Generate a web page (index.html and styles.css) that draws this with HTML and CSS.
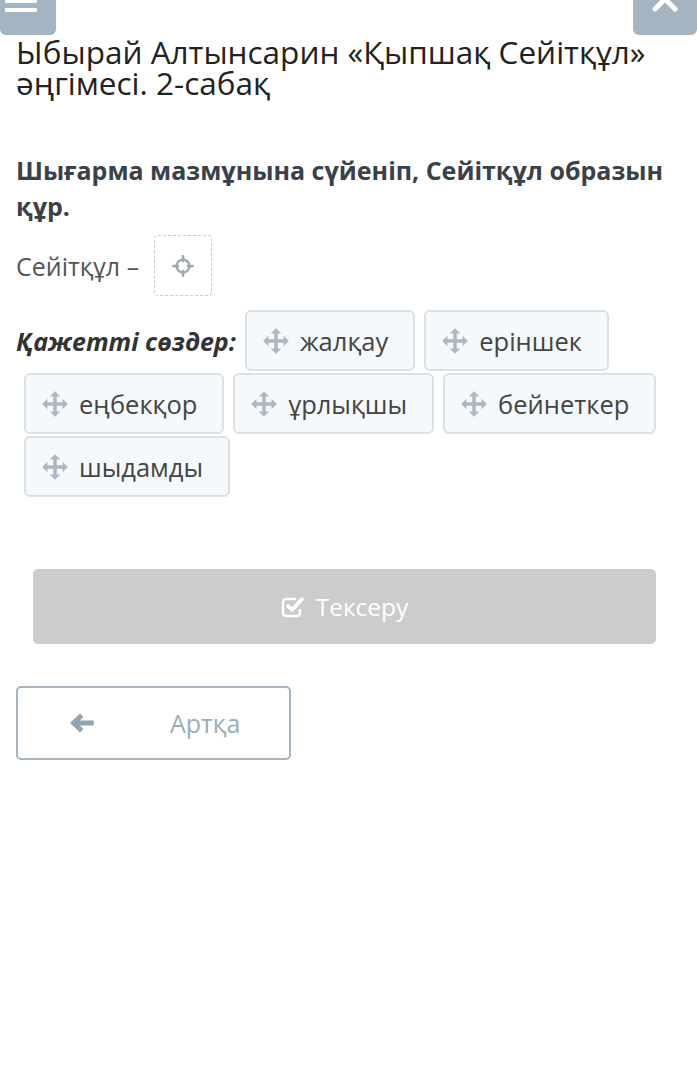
FILE: index.html
```html
<!DOCTYPE html>
<html>
<head>
    <meta charset="utf-8">
    <title>Қыпшақ Сейітқұл</title>
    <link rel="stylesheet" href="styles.css">
</head>
<body>
    <div class="topbar">
        <div class="menu-btn">
            <span class="bar"></span>
            <span class="bar"></span>
        </div>
        <div class="close-btn">
            <svg width="30" height="30" viewBox="0 0 30 30">
                <path d="M5 5 L25 25 M25 5 L5 25" stroke="#fff" stroke-width="5" stroke-linecap="round"/>
            </svg>
        </div>
    </div>

    <h1 class="title">Ыбырай Алтынсарин «Қыпшақ Сейітқұл» әңгімесі. 2-сабақ</h1>

    <div class="task">
        <p class="question">Шығарма мазмұнына сүйеніп, Сейітқұл образын құр.</p>

        <div class="answer-row">
            <span class="answer-text">Сейітқұл –</span>
            <div class="drop-box">
                <svg width="22" height="22" viewBox="0 0 24 24">
                    <circle cx="12" cy="12" r="7" fill="none" stroke="#9dacb6" stroke-width="2.6"/>
                    <path d="M12 1.5 V6.5 M12 17.5 V22.5 M1.5 12 H6.5 M17.5 12 H22.5" stroke="#9dacb6" stroke-width="3" stroke-linecap="round"/>
                </svg>
            </div>
        </div>

        <div class="words">
            <span class="words-label">Қажетті сөздер:</span>
            <div class="chip"><svg class="move" viewBox="0 0 24 24"><path d="M12 1 L16.5 5.5 H13.5 V10.5 H18.5 V7.5 L23 12 L18.5 16.5 V13.5 H13.5 V18.5 H16.5 L12 23 L7.5 18.5 H10.5 V13.5 H5.5 V16.5 L1 12 L5.5 7.5 V10.5 H10.5 V5.5 H7.5 Z"/></svg>жалқау</div>
            <div class="chip"><svg class="move" viewBox="0 0 24 24"><path d="M12 1 L16.5 5.5 H13.5 V10.5 H18.5 V7.5 L23 12 L18.5 16.5 V13.5 H13.5 V18.5 H16.5 L12 23 L7.5 18.5 H10.5 V13.5 H5.5 V16.5 L1 12 L5.5 7.5 V10.5 H10.5 V5.5 H7.5 Z"/></svg>еріншек</div>
            <div class="chip"><svg class="move" viewBox="0 0 24 24"><path d="M12 1 L16.5 5.5 H13.5 V10.5 H18.5 V7.5 L23 12 L18.5 16.5 V13.5 H13.5 V18.5 H16.5 L12 23 L7.5 18.5 H10.5 V13.5 H5.5 V16.5 L1 12 L5.5 7.5 V10.5 H10.5 V5.5 H7.5 Z"/></svg>еңбекқор</div>
            <div class="chip"><svg class="move" viewBox="0 0 24 24"><path d="M12 1 L16.5 5.5 H13.5 V10.5 H18.5 V7.5 L23 12 L18.5 16.5 V13.5 H13.5 V18.5 H16.5 L12 23 L7.5 18.5 H10.5 V13.5 H5.5 V16.5 L1 12 L5.5 7.5 V10.5 H10.5 V5.5 H7.5 Z"/></svg>ұрлықшы</div>
            <div class="chip"><svg class="move" viewBox="0 0 24 24"><path d="M12 1 L16.5 5.5 H13.5 V10.5 H18.5 V7.5 L23 12 L18.5 16.5 V13.5 H13.5 V18.5 H16.5 L12 23 L7.5 18.5 H10.5 V13.5 H5.5 V16.5 L1 12 L5.5 7.5 V10.5 H10.5 V5.5 H7.5 Z"/></svg>бейнеткер</div>
            <div class="chip"><svg class="move" viewBox="0 0 24 24"><path d="M12 1 L16.5 5.5 H13.5 V10.5 H18.5 V7.5 L23 12 L18.5 16.5 V13.5 H13.5 V18.5 H16.5 L12 23 L7.5 18.5 H10.5 V13.5 H5.5 V16.5 L1 12 L5.5 7.5 V10.5 H10.5 V5.5 H7.5 Z"/></svg>шыдамды</div>
        </div>
    </div>

    <button class="check-btn" type="button">
        <svg width="24" height="22" viewBox="0 0 24 22">
            <path d="M15 3 H5 A3 3 0 0 0 2 6 V17 A3 3 0 0 0 5 20 H16 A3 3 0 0 0 19 17 V13" fill="none" stroke="#fff" stroke-width="2.6"/>
            <path d="M7 10 L11 14 L21 3" fill="none" stroke="#fff" stroke-width="3.6" stroke-linecap="round" stroke-linejoin="round"/>
        </svg>
        Тексеру
    </button>

    <button class="back-btn" type="button">
        <svg class="back-arrow" width="26" height="22" viewBox="0 0 26 22">
            <path d="M2 11 L11 2.5 L13.5 5 L9 9.2 H24 V12.8 H9 L13.5 17 L11 19.5 Z" fill="#90a6b2" stroke="#90a6b2" stroke-width="1.5" stroke-linejoin="round"/>
        </svg>
        <span>Артқа</span>
    </button>
</body>
</html>
```

FILE: styles.css
```css
body {
    margin: 0;
    font-family: "Open Sans", "Noto Sans", sans-serif;
    background-color: #fff;
    color: #222;
}

.topbar {
    display: flex;
    justify-content: space-between;
    height: 35px;
}

.menu-btn {
    width: 56px;
    height: 35px;
    background-color: #a4b5c1;
    border-radius: 0 0 6px 6px;
    display: flex;
    flex-direction: column;
    gap: 5px;
    padding: 0 0 0 5px;
    box-sizing: border-box;
    overflow: hidden;
}

.menu-btn .bar {
    display: block;
    width: 32px;
    height: 4px;
    background-color: #fff;
    border-radius: 1px;
}

.menu-btn .bar:first-child {
    margin-top: -1px;
}

.close-btn {
    width: 64px;
    height: 35px;
    background-color: #a4b5c1;
    border-radius: 0 0 6px 6px;
    display: flex;
    justify-content: center;
    overflow: hidden;
}

.close-btn svg {
    margin-top: -16px;
}

.title {
    margin: 1px 0 0 16px;
    font-size: 31.5px;
    line-height: 31px;
    font-weight: 400;
    color: #222;
}

.task {
    padding: 0 16px;
}

.question {
    margin: 54px -12px 0 0;
    font-size: 25px;
    line-height: 36px;
    font-weight: 700;
    color: #3a4149;
}

.answer-row {
    display: flex;
    align-items: center;
    gap: 15px;
    margin-top: 11px;
}

.answer-text {
    font-size: 25px;
    color: #555;
}

.drop-box {
    width: 58px;
    height: 61px;
    border: 1.5px dashed #c9cccf;
    border-radius: 4px;
    box-sizing: border-box;
    display: flex;
    align-items: center;
    justify-content: center;
}

.words {
    display: flex;
    flex-wrap: wrap;
    align-items: center;
    gap: 2px 9px;
    margin-top: 14px;
    padding-left: 8px;
}

.words-label {
    margin-left: -8px;
    font-size: 25px;
    font-weight: 700;
    font-style: italic;
    color: #333;
}

.chip {
    display: flex;
    align-items: center;
    gap: 10px;
    height: 61px;
    padding: 0 25px 0 15px;
    background-color: #f5f9fb;
    border: 2px solid #d9e1e6;
    border-radius: 6px;
    box-sizing: border-box;
    font-size: 25.5px;
    color: #444;
}

.move {
    width: 28px;
    height: 28px;
    fill: #a9b9c3;
}

.check-btn {
    display: flex;
    align-items: center;
    justify-content: center;
    gap: 11px;
    width: 623px;
    height: 75px;
    margin: 72px 0 0 33px;
    border: none;
    border-radius: 5px;
    background-color: #cccccc;
    color: #fff;
    font-family: "Open Sans", "Noto Sans", sans-serif;
    font-size: 24.5px;
}

.back-btn {
    display: flex;
    align-items: center;
    width: 275px;
    height: 74px;
    margin: 42px 0 0 16px;
    padding: 0 0 0 51px;
    border: 2px solid #a4b5c1;
    border-radius: 5px;
    background-color: #fff;
    color: #9aadb8;
    font-family: "Open Sans", "Noto Sans", sans-serif;
    font-size: 25px;
    box-sizing: border-box;
}

.back-arrow {
    margin-right: 75px;
}
```
